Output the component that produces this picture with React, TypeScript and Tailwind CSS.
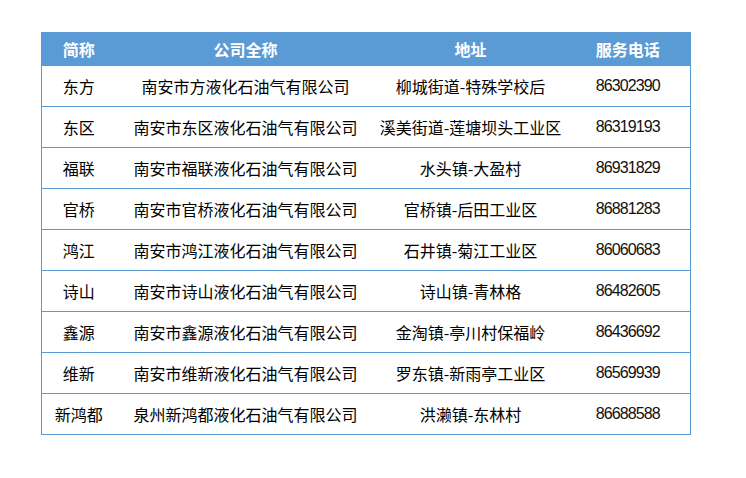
import React from "react";

const rows = [
  ["东方", "南安市方液化石油气有限公司", "柳城街道-特殊学校后", "86302390"],
  ["东区", "南安市东区液化石油气有限公司", "溪美街道-莲塘坝头工业区", "86319193"],
  ["福联", "南安市福联液化石油气有限公司", "水头镇-大盈村", "86931829"],
  ["官桥", "南安市官桥液化石油气有限公司", "官桥镇-后田工业区", "86881283"],
  ["鸿江", "南安市鸿江液化石油气有限公司", "石井镇-菊江工业区", "86060683"],
  ["诗山", "南安市诗山液化石油气有限公司", "诗山镇-青林格", "86482605"],
  ["鑫源", "南安市鑫源液化石油气有限公司", "金淘镇-亭川村保福岭", "86436692"],
  ["维新", "南安市维新液化石油气有限公司", "罗东镇-新雨亭工业区", "86569939"],
  ["新鸿都", "泉州新鸿都液化石油气有限公司", "洪濑镇-东林村", "86688588"],
];

const cjk = "font-['SimSun','Noto_Sans_CJK_SC',sans-serif]";

export default function App() {
  return (
    <div className={`min-h-[478px] bg-white pl-[41px] pt-[32px] ${cjk}`}>
      <table className="w-[649px] table-fixed border-collapse border border-[#5b9bd5] text-[16px] text-black">
        <colgroup>
          <col className="w-[74px]" />
          <col className="w-[260px]" />
          <col className="w-[190px]" />
          <col className="w-[125px]" />
        </colgroup>
        <thead>
          {/* header row */}
          <tr className="h-[33px] bg-[#5b9bd5] text-white font-bold">
            <th className="p-0 text-center font-bold">简称</th>
            <th className="p-0 text-center font-bold">公司全称</th>
            <th className="p-0 text-center font-bold">地址</th>
            <th className="p-0 text-center font-bold">服务电话</th>
          </tr>
        </thead>
        <tbody>
          {rows.map((r, i) => (
            <tr key={i} className="h-[41px] border-b border-[#5b9bd5]">
              <td className="p-0 text-center">{r[0]}</td>
              <td className="p-0 text-center whitespace-nowrap">{r[1]}</td>
              <td className="p-0 text-center whitespace-nowrap">{r[2]}</td>
              <td className="p-0 text-center font-['Liberation_Sans',sans-serif] text-[16px] tracking-[-0.9px] text-[#111]">
                {r[3]}
              </td>
            </tr>
          ))}
        </tbody>
      </table>
    </div>
  );
}
